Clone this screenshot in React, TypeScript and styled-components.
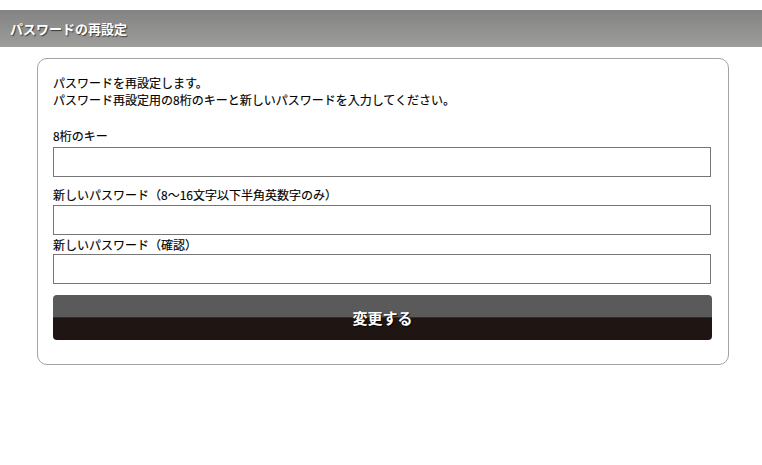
import React from "react";
import styled, { createGlobalStyle } from "styled-components";

const Global = createGlobalStyle`
  html, body { margin: 0; padding: 0; background: #fff; }
  body {
    font-family: "Noto Sans CJK JP", "Noto Sans", "DejaVu Sans", sans-serif;
    color: #000;
  }
  * { box-sizing: border-box; }
`;

const Page = styled.div`
  width: 762px;
  padding-top: 10px;
`;

const Header = styled.h1`
  margin: 0;
  height: 37px;
  display: flex;
  align-items: center;
  padding-left: 10px;
  background: linear-gradient(#838383, #9d9d9b);
  color: #fff;
  font-size: 13px;
  font-weight: bold;
  text-shadow: 1px 1px 1px rgba(0, 0, 0, 0.6);
`;

const Card = styled.form`
  margin: 11px 0 0 37px;
  width: 692px;
  border: 1px solid #a3a3a3;
  border-radius: 10px;
  padding: 15px 16px 24px 15px;
  display: flex;
  flex-direction: column;
`;

const Intro = styled.p`
  margin: 0;
  font-size: 12px;
  line-height: 17px;
  -webkit-text-stroke: 0.15px #000;
`;

const Label = styled.label<{ $top: number }>`
  display: block;
  margin-top: ${(p) => p.$top}px;
  font-size: 12px;
  line-height: 17px;
  -webkit-text-stroke: 0.15px #000;
`;

const Input = styled.input<{ $top: number }>`
  display: block;
  margin-top: ${(p) => p.$top}px;
  width: 658px;
  height: 30px;
  border: 1px solid #767676;
  border-radius: 0;
  padding: 0 4px;
  font-size: 12px;
  background: #fff;
`;

const Submit = styled.button`
  margin-top: 11px;
  width: 659px;
  height: 45px;
  border: none;
  border-radius: 4px;
  background: linear-gradient(#5b5a5a 0%, #5b5a5a 48%, #1f1512 51%, #1f1512 100%);
  color: #fff;
  font-family: inherit;
  font-size: 15px;
  font-weight: bold;
  text-shadow: 1px 1px 1px rgba(0, 0, 0, 0.8);
  cursor: pointer;
`;

export default function App() {
  return (
    <Page>
      <Global />
      <Header>パスワードの再設定</Header>
      <Card onSubmit={(e) => e.preventDefault()}>
        <Intro>
          パスワードを再設定します。
          <br />
          パスワード再設定用の8桁のキーと新しいパスワードを入力してください。
        </Intro>
        <Label $top={19}>8桁のキー</Label>
        <Input $top={3} type="text" />
        <Label $top={9}>新しいパスワード（8〜16文字以下半角英数字のみ）</Label>
        <Input $top={2} type="password" />
        <Label $top={1}>新しいパスワード（確認）</Label>
        <Input $top={1} type="password" />
        <Submit type="submit">変更する</Submit>
      </Card>
    </Page>
  );
}
